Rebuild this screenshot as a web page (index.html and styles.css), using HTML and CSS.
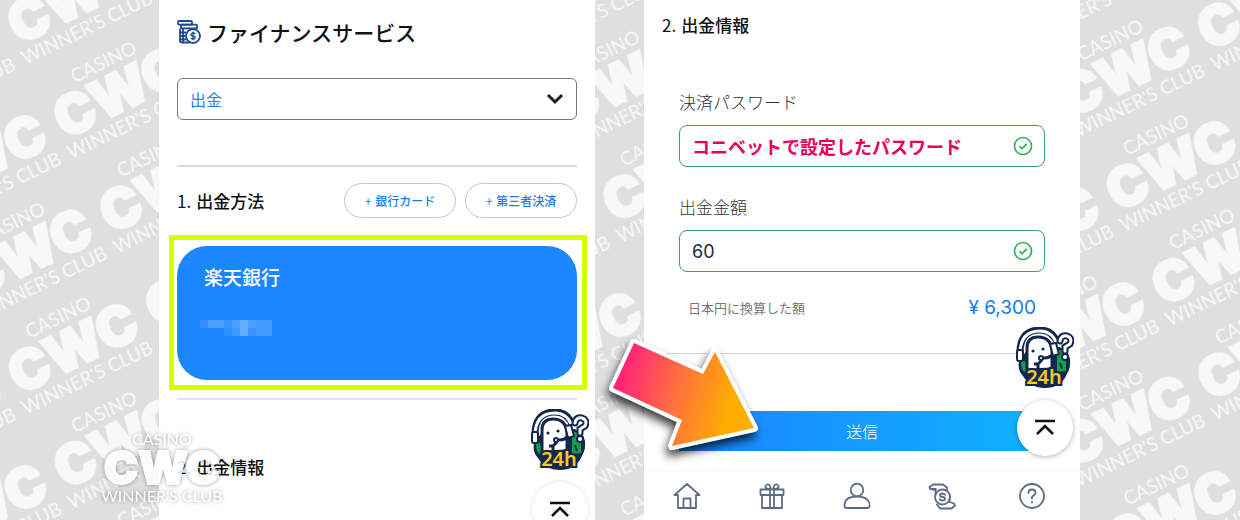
FILE: index.html
```html
<!DOCTYPE html>
<html lang="ja">
<head>
<meta charset="utf-8">
<title>ファイナンスサービス</title>
<link rel="stylesheet" href="styles.css">
</head>
<body>
<svg class="sprite" aria-hidden="true">
  <symbol id="support" viewBox="0 0 58 62">
    <path d="M3 34Q1 43 7 49Q14 61 29 61Q44 61 50 49Q56 40 52 28L44 20L12 22Z" fill="#14284b"/>
    <path d="M40 22Q50 20 53 32Q54 41 50 45L40 46Z" fill="#12a04b" stroke="#14284b" stroke-width="2"/>
    <path d="M5 35L9 34L12 43L8 45Q5 41 5 35Z" fill="#12a04b"/>
    <path d="M4 28Q3 3 24 3Q37 3 42 17" fill="none" stroke="#14284b" stroke-width="7"/>
    <path d="M4 27Q4 4 24 4Q36 4 41 17" fill="none" stroke="#fff" stroke-width="3"/>
    <path d="M11 43V21Q11 10 22 10Q35 10 36 24V42Z" fill="#fff" stroke="#14284b" stroke-width="3"/>
    <rect x="1" y="23" width="6" height="11" rx="2" fill="#fff" stroke="#14284b" stroke-width="2"/>
    <path d="M34 17L40 16L43 27L37 29Z" fill="#fff" stroke="#14284b" stroke-width="2"/>
    <circle cx="17" cy="24" r="1.6" fill="#14284b"/><circle cx="27" cy="22" r="1.6" fill="#14284b"/>
    <path d="M37 27Q34 31 28 31M23 31H28M18 37H22V42M22 37L26 33" fill="none" stroke="#14284b" stroke-width="3"/>
    <circle cx="25" cy="31" r="2" fill="#fff" stroke="#14284b" stroke-width="2"/>
    <path d="M44 36L46 42M51 32V42" stroke="#14284b" stroke-width="2"/>
    <path d="M44 14Q45 8 51 9Q57 11 54 17L49 20V24" fill="none" stroke="#14284b" stroke-width="7" stroke-linecap="round"/>
    <circle cx="49" cy="30" r="4" fill="#14284b"/>
    <path d="M44 14Q45 8 51 9Q57 11 54 17L49 20V24" fill="none" stroke="#fff" stroke-width="3" stroke-linecap="round"/>
    <circle cx="49" cy="30" r="2" fill="#fff"/>
    <text class="support-text" x="28" y="57" text-anchor="middle">24h</text>
  </symbol>
  <symbol id="to-top" viewBox="0 0 24 24">
    <path d="M2 5H22M4 18L12 10L20 18" fill="none" stroke="#111" stroke-width="2.6"/>
  </symbol>
  <symbol id="check" viewBox="0 0 20 20">
    <circle cx="10" cy="10" r="8.5" fill="none" stroke="#2fb457" stroke-width="1.7"/>
    <path d="M6.3 10.2L9 12.6L13.8 7.8" fill="none" stroke="#2fb457" stroke-width="1.8"/>
  </symbol>
  <symbol id="cwc-logo" viewBox="0 0 140 84">
    <text class="logo-thin" x="70" y="17" text-anchor="middle">CASINO</text>
    <text class="logo-heavy" x="70" y="56" text-anchor="middle">CWC</text>
    <text class="logo-thin" x="70" y="74" text-anchor="middle">WINNER'S CLUB</text>
  </symbol>
</svg>

<main class="stage">
  <svg class="backdrop" aria-hidden="true">
    <defs>
      <pattern id="tile" width="152.5" height="105" patternUnits="userSpaceOnUse" patternTransform="translate(103 62) rotate(-25.9) translate(-76 -22)">
        <use href="#cwc-logo" x="-6" y="9" width="165" height="99"/>
      </pattern>
    </defs>
    <rect width="100%" height="100%" fill="url(#tile)"/>
  </svg>

  <section class="panel panel-method">
    <h1 class="title">
      <svg class="title-icon" viewBox="0 0 24 24" aria-hidden="true">
        <g fill="none" stroke="#1d4a8f" stroke-width="1.8" stroke-linejoin="round">
          <rect x="1" y="1" width="14" height="3.6" rx="1"/><rect x="4" y="4.6" width="16" height="3.8" rx="1"/>
          <path d="M3 8.4V21Q3 22.5 5 22.5H13M3 12.5H9M3 16H8M3 19.5H9M6 8.4V22"/>
          <circle cx="16" cy="16" r="7" fill="#fff"/>
          <path d="M18.2 14Q17.5 13 16 13T14 14.4T16 16T18.2 17.7T16 19T13.8 18M16 11.7V20.3" stroke-width="1.3"/>
        </g>
      </svg>
      ファイナンスサービス
    </h1>
    <div class="select-wrap">
      <select class="select" aria-label="取引"><option>出金</option></select>
      <svg class="chevron" viewBox="0 0 18 12" aria-hidden="true"><path d="M2 2L9 9L16 2" fill="none" stroke="#14202f" stroke-width="3"/></svg>
    </div>
    <hr class="rule rule-top">
    <div class="method-head">
      <h2 class="heading"><span class="num">1.</span>出金方法</h2>
      <div class="pills">
        <button class="pill" type="button"><span class="plus">+</span>銀行カード</button>
        <button class="pill" type="button"><span class="plus">+</span>第三者決済</button>
      </div>
    </div>
    <div class="highlight">
      <button class="bank" type="button">
        <span class="bank-name">楽天銀行</span>
        <svg class="mosaic" viewBox="0 0 72 16" shape-rendering="crispEdges" aria-hidden="true">
          <g fill="#fff">
            <path d="M0 0H8V8H0Z" opacity=".1"/><path d="M8 0H24V8H8Z" opacity=".22"/><path d="M24 0H32V8H24Z" opacity=".12"/>
            <path d="M32 0H40V8H32Z" opacity=".2"/><path d="M24 8H32V16H24Z" opacity=".08"/><path d="M32 8H40V16H32Z" opacity=".15"/>
            <path d="M40 0H48V16H40Z" opacity=".32"/><path d="M48 0H56V8H48Z" opacity=".2"/><path d="M48 8H56V16H48Z" opacity=".12"/><path d="M56 0H72V16H56Z" opacity=".18"/>
          </g>
        </svg>
      </button>
    </div>
    <hr class="rule rule-mid">
    <h2 class="heading heading-next"><span class="num">2.</span>出金情報</h2>
    <svg class="watermark" viewBox="0 0 140 84" role="img" aria-label="CASINO CWC WINNER'S CLUB"><use href="#cwc-logo"/></svg>
    <div class="floating floating-left">
      <button class="support" type="button" aria-label="24h"><svg><use href="#support"/></svg></button>
      <button class="to-top" type="button" aria-label="上へ"><svg><use href="#to-top"/></svg></button>
    </div>
  </section>

  <section class="panel panel-info">
    <h2 class="heading"><span class="num">2.</span>出金情報</h2>
    <form class="form">
      <label class="label" for="password">決済パスワード</label>
      <div class="field">
        <input class="input input-password" id="password" type="text" value="コニベットで設定したパスワード">
        <svg class="check" aria-hidden="true"><use href="#check"/></svg>
      </div>
      <label class="label label-amount" for="amount">出金金額</label>
      <div class="field">
        <input class="input" id="amount" type="text" value="60">
        <svg class="check" aria-hidden="true"><use href="#check"/></svg>
      </div>
      <div class="converted"><span>日本円に換算した額</span><output class="yen" for="amount">¥ 6,300</output></div>
      <hr class="rule rule-form">
      <button class="submit" type="button">送信</button>
    </form>
    <nav class="nav">
      <a href="#home" aria-label="ホーム"><svg viewBox="0 0 28 28"><path d="M5 13H1.500L14 2L26.500 13H23V26H5V13M10.500 26V16.500H17.500V26"/></svg></a>
      <a href="#gift" aria-label="ギフト"><svg viewBox="0 0 28 28"><path d="M2.500 7.500H25.500V13H2.500ZM4 13V26H24V13M12 7.500V26M16 7.500V26M12.500 7Q7 7 7.500 4Q8.500 1.500 11.500 3L13 7M15.500 7Q21 7 20.500 4Q19.500 1.500 16.500 3L15 7"/></svg></a>
      <a href="#account" aria-label="アカウント"><svg viewBox="0 0 28 28"><circle cx="14" cy="8" r="6.300"/><path d="M26.500 21Q24 14.500 14 14.500Q1.500 14.500 1.500 24Q1.500 26 3.500 26H25Q27 25.500 26.500 23"/></svg></a>
      <a href="#finance" aria-label="ファイナンス"><svg viewBox="0 0 28 28"><circle cx="14.500" cy="15" r="7.500"/><path d="M7.500 13V8.500L3 7L1.500 5L5 2.500H15L19 5.500V9M2 7H8M21.500 17V20L26 21.500L27 23.500L23.500 26.500H12L9 22.500M17 12.800Q16 11.500 14.500 11.500Q12 11.600 12 13.300T14.500 15T17 16.800T14.500 18.500T12 17.200"/></svg></a>
      <a href="#help" aria-label="ヘルプ"><svg viewBox="0 0 28 28"><circle cx="14" cy="14" r="12"/><path d="M10.500 11Q10.500 7.500 14 7.500T17.500 10.800Q17.500 12.800 14 14.500V16.500M14 20V20.500"/></svg></a>
    </nav>
    <svg class="pointer" viewBox="0 0 180 140" aria-hidden="true">
      <defs>
        <linearGradient id="heat" gradientUnits="userSpaceOnUse" x1="20" y1="50" x2="130" y2="80">
          <stop offset="0" stop-color="#ff2378"/><stop offset=".5" stop-color="#ff7040"/><stop offset="1" stop-color="#ffad00"/>
        </linearGradient>
      </defs>
      <path d="M34 13L103 44L115 22L154 98L72 116L82 90L13 58Z" fill="url(#heat)" stroke="#fff" stroke-width="8" stroke-linejoin="round" paint-order="stroke"/>
    </svg>
    <div class="floating floating-right">
      <button class="support" type="button" aria-label="24h"><svg><use href="#support"/></svg></button>
      <button class="to-top" type="button" aria-label="上へ"><svg><use href="#to-top"/></svg></button>
    </div>
  </section>
</main>
</body>
</html>
```
FILE: styles.css
```css
* { box-sizing: border-box; }

body {
  margin: 0;
  background: #dfdfdf;
  color: #111;
  font-family: "Noto Sans CJK JP", "Noto Sans", sans-serif;
}

button, input, select { font: inherit; }

.sprite { display: none; }

.logo-thin { font: 400 16px Lato, sans-serif; }
.logo-heavy {
  font: 900 46px Inter, sans-serif;
  stroke: #fff;
  stroke-width: 2px;
}
.support-text {
  font: 600 20px "Noto Sans", sans-serif;
  fill: #fbc926;
  stroke: #14284b;
  stroke-width: 4px;
  paint-order: stroke;
}

.stage {
  position: relative;
  display: grid;
  grid-template-columns:
    minmax(0, 159fr) minmax(0, 436fr) minmax(0, 49fr)
    minmax(0, 436fr) minmax(0, 160fr);
  min-height: 100vh;
  overflow: hidden;
}

.backdrop {
  position: absolute;
  width: 100%;
  height: 100%;
  fill: #fff;
  opacity: .78;
}

.panel { position: relative; background: #fff; }
.panel-method { grid-column: 2; padding: 18px 18px 0; }
.panel-info { grid-column: 4; padding-top: 12px; }

.title {
  display: flex;
  align-items: center;
  gap: 6px;
  margin: 0;
  font-size: 21px;
  font-weight: 500;
  line-height: 28px;
}
.title-icon { width: 24px; height: 24px; }

.select-wrap {
  display: grid;
  align-items: center;
  margin-top: 32px;
}
.select-wrap > * { grid-area: 1 / 1; }
.select {
  appearance: none;
  width: 100%;
  height: 42px;
  padding: 0 12px;
  border: 1px solid #777;
  border-radius: 6px;
  background: #fff;
  color: #2585ee;
  font-size: 16px;
}
.chevron {
  justify-self: end;
  width: 18px;
  height: 12px;
  margin-right: 13px;
  pointer-events: none;
}

.rule { height: 2px; margin: 0; border: 0; background: #d5dadb; }
.rule-top { margin-top: 45px; }
.rule-mid { margin-top: 8px; background: #dce4eb; }
.rule-form { height: 1px; margin: 32px -17px 0; background: #d2d6df; }

.heading {
  display: flex;
  gap: 5px;
  margin: 0;
  font-size: 17px;
  font-weight: 500;
  line-height: 26px;
}
.num { font-weight: 400; }
.panel-info > .heading { padding: 0 18px; }
.heading-next { margin-top: 54px; }

.method-head {
  display: flex;
  align-items: center;
  justify-content: space-between;
  margin-top: 16px;
}
.pills { display: flex; gap: 9px; }
.pill {
  display: flex;
  align-items: center;
  justify-content: center;
  gap: 4px;
  width: 112px;
  height: 35px;
  padding: 0;
  border: 1px solid #c3c6d0;
  border-radius: 18px;
  background: #fff;
  color: #1c7ced;
  font-size: 12px;
  font-weight: 500;
}
.plus { font-weight: 400; }

.highlight {
  margin: 17px -10px 0 -8px;
  padding: 6px 5px 5px 3px;
  border: 5px solid #d6ff00;
}
.bank {
  display: flex;
  flex-direction: column;
  align-items: flex-start;
  width: 100%;
  height: 134px;
  padding: 18px 27px;
  border: 0;
  border-radius: 30px;
  background: #1c86ff;
  color: #fff;
  font-size: 19px;
  font-weight: 500;
  line-height: 26px;
}
.mosaic { width: 72px; height: 16px; margin: 30px 0 0 -4px; }

.watermark {
  position: absolute;
  top: 428px;
  left: -67px;
  width: 140px;
  height: 84px;
  overflow: visible;
  fill: #fff;
  opacity: .85;
  filter: drop-shadow(0 0 2px rgba(0, 0, 0, .45));
}

.floating {
  position: absolute;
  right: 6px;
  display: flex;
  flex-direction: column;
  align-items: center;
  gap: 11px;
}
.floating-left { top: 409px; }
.floating-right { top: 327px; }
.floating button { padding: 0; border: 0; background: none; }
.support { width: 58px; height: 62px; }
.support svg { display: block; width: 58px; height: 62px; }
.floating .to-top {
  display: grid;
  place-items: center;
  width: 56px;
  height: 56px;
  border-radius: 50%;
  background: #fff;
  box-shadow: 0 1px 5px rgba(0, 0, 0, .3);
}
.floating-left .to-top { box-shadow: 0 0 4px rgba(0, 0, 0, .12); }
.to-top svg { width: 24px; height: 24px; }

.form { margin: 51px 35px 0; }
.label {
  display: block;
  color: #333;
  font-size: 17px;
  font-weight: 300;
  line-height: 26px;
}
.label-amount { margin-top: 27px; }
.field {
  display: flex;
  align-items: center;
  height: 42px;
  margin-top: 10px;
  padding: 0 11px 0 12px;
  border: 1px solid #35a45b;
  border-radius: 8px;
}
.input {
  flex: 1;
  min-width: 0;
  padding: 0;
  border: 0;
  outline: 0;
  background: none;
  color: #222b3c;
  font-family: Inter, "Noto Sans CJK JP", sans-serif;
  font-size: 18px;
}
.input-password { color: #e8005f; font-weight: 700; }
.check { width: 20px; height: 20px; }
.converted {
  display: flex;
  justify-content: space-between;
  margin-top: 23px;
  padding: 0 9px;
  color: #777;
  font-size: 13px;
  line-height: 26px;
}
.yen {
  color: #1979ee;
  font-family: Inter, "Noto Sans CJK JP", sans-serif;
  font-size: 19px;
}
.submit {
  display: block;
  width: 100%;
  height: 40px;
  margin-top: 57px;
  border: 0;
  background: linear-gradient(90deg, #1a84ff, #10b2ff);
  color: #fff;
  font-size: 16px;
  font-weight: 300;
}

.nav {
  display: grid;
  grid-template-columns: repeat(4, 85fr) 96fr;
  align-items: center;
  justify-items: center;
  height: 49px;
  margin-top: 20px;
  border-top: 1px solid #fafafa;
}
.nav a { display: block; height: 28px; }
.nav svg {
  width: 28px;
  height: 28px;
  fill: none;
  stroke: #5e6c83;
  stroke-width: 1.8;
  stroke-linecap: round;
  stroke-linejoin: round;
}

.pointer {
  position: absolute;
  top: 330px;
  left: -44px;
  width: 180px;
  height: 140px;
  overflow: visible;
  filter: drop-shadow(-2px 6px 5px rgba(0, 0, 0, .75));
}
```
